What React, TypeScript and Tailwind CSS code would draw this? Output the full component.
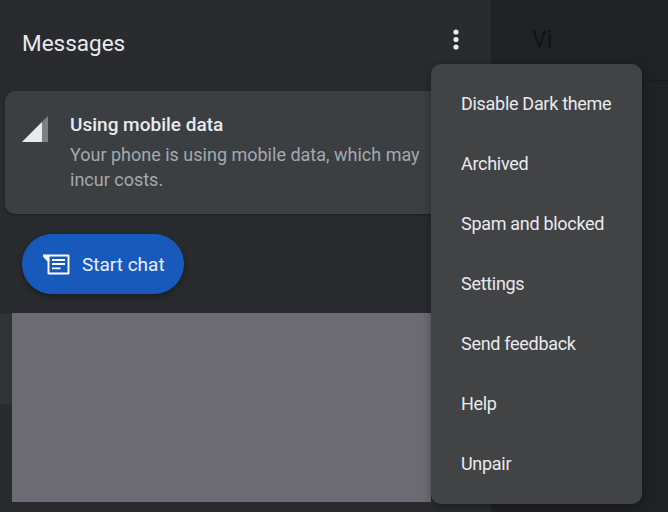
export default function App() {
  const items = ["Disable Dark theme", "Archived", "Spam and blocked", "Settings", "Send feedback", "Help", "Unpair"];
  return (
    <div className="relative flex h-[512px] w-[668px] overflow-hidden bg-[#202124] font-['Roboto',sans-serif]">
      <div className="flex w-[491px] shrink-0 flex-col bg-[#2a2b2e]">
        <header className="flex h-[91px] shrink-0 items-start justify-between pl-[22px] pr-[24px] pt-[28px]">
          <h1 className="text-[22.5px] leading-[30px] text-[#e8eaed]">Messages</h1>
          <svg width="22" height="24" viewBox="0 0 22 24" className="text-[#e8eaed]" fill="currentColor">
            <circle cx="11" cy="4" r="2.6" />
            <circle cx="11" cy="11.5" r="2.6" />
            <circle cx="11" cy="19" r="2.6" />
          </svg>
        </header>
        <section className="ml-[5px] flex h-[123px] w-[480px] shrink-0 gap-[22px] rounded-[10px] bg-[#3c3f42] pl-[17px] pt-[21px] shadow-[0_1px_3px_rgba(0,0,0,0.35)]">
          <svg width="26" height="26" viewBox="0 0 26 26" className="mt-[4px] shrink-0">
            <path d="M26 0V26H0Z" fill="#7d8083" />
            <path d="M20 6V26H0Z" fill="#e8eaed" />
          </svg>
          <div>
            <h2 className="text-[19px] font-medium leading-[25px] text-[#e8eaed]">Using mobile data</h2>
            <p className="mt-[5px] w-[360px] text-[18px] leading-[25px] text-[#a3a9ae]">Your phone is using mobile data, which may incur costs.</p>
          </div>
        </section>
        <button className="ml-[22px] mt-[20px] flex h-[60px] w-[162px] shrink-0 items-center rounded-full bg-[#185abc] pl-[21px] text-[19px] text-[#e8f0fe] shadow-[0_2px_6px_rgba(0,0,0,0.4)]">
          <svg width="28" height="24" viewBox="0 0 28 24" fill="none" className="mr-[11px] shrink-0">
            <path d="M0 3.5H25.5V21.5H5.5V9Z" stroke="#fff" strokeWidth="1.9" strokeLinejoin="round" />
            <path d="M-0.5 3H6.5V9.5Z" fill="#fff" />
            <path d="M9 8H22M9 12H22M9 16.3H17.5" stroke="#fff" strokeWidth="1.8" />
          </svg>
          <span className="mt-[2px]">Start chat</span>
        </button>
        <div className="mt-[19px] flex h-[189px] shrink-0">
          <div className="mt-[1px] h-[90px] w-[12px] bg-[#323336]" />
          <div className="h-[189px] w-[419px] bg-[#6c6b73]" />
        </div>
      </div>
      <div className="h-[81px] flex-1 border-b border-[#1b1c1f] pl-[41px] pt-[24px] text-[23px] leading-[32px] text-[#111214]">Vi</div>
      <nav className="absolute left-[431px] top-[64px] flex h-[440px] w-[211px] flex-col rounded-[10px] bg-[#424345] pt-[9px] shadow-[0_2px_8px_rgba(0,0,0,0.35)]">
        {items.map((t) => (
          <div key={t} className="flex h-[60px] shrink-0 items-center pl-[30px] text-[18px] tracking-[-0.3px] text-[#e8eaed]">{t}</div>
        ))}
      </nav>
    </div>
  );
}
